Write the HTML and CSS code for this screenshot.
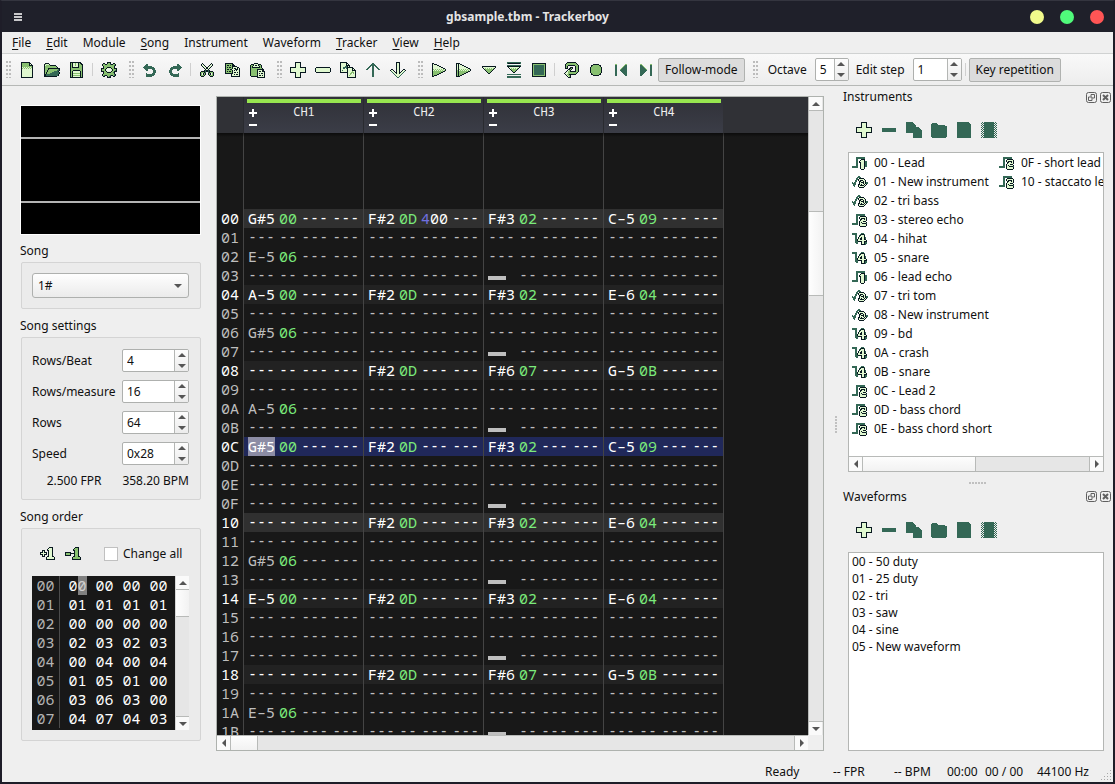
FILE: index.html
```html
<!DOCTYPE html>
<html lang="en">
<head>
<meta charset="utf-8">
<title>gbsample.tbm - Trackerboy</title>
<link rel="stylesheet" href="styles.css">
</head>
<body>
<div class="window">
  <header class="titlebar">
    <button class="win-menu" aria-label="Window menu"><span></span><span></span><span></span></button>
    <h1 class="win-title">gbsample.tbm - Trackerboy</h1>
    <div class="win-buttons">
      <button class="dot dot-yellow" aria-label="Minimize"></button>
      <button class="dot dot-green" aria-label="Maximize"></button>
      <button class="dot dot-red" aria-label="Close"></button>
    </div>
  </header>

  <nav class="menubar">
    <button><u>F</u>ile</button><button><u>E</u>dit</button><button>Module</button><button><u>S</u>ong</button><button>Instrument</button><button>Waveform</button><button><u>T</u>racker</button><button><u>V</u>iew</button><button><u>H</u>elp</button>
  </nav>

  <div class="toolbar">
    <i class="grip"></i>
    <button class="tool" data-icon="new" aria-label="New"></button>
    <button class="tool" data-icon="open" aria-label="Open"></button>
    <button class="tool" data-icon="save" aria-label="Save"></button>
    <i class="sep"></i>
    <button class="tool" data-icon="gear" aria-label="Configuration"></button>
    <i class="grip"></i>
    <button class="tool" data-icon="undo" aria-label="Undo"></button>
    <button class="tool" data-icon="redo" aria-label="Redo"></button>
    <i class="sep"></i>
    <button class="tool" data-icon="cut" aria-label="Cut"></button>
    <button class="tool" data-icon="copy" aria-label="Copy"></button>
    <button class="tool" data-icon="paste" aria-label="Paste"></button>
    <i class="grip"></i>
    <button class="tool" data-icon="plus" aria-label="Add song"></button>
    <button class="tool" data-icon="minus" aria-label="Remove song"></button>
    <button class="tool" data-icon="dup" aria-label="Duplicate"></button>
    <button class="tool" data-icon="up" aria-label="Move up"></button>
    <button class="tool" data-icon="down" aria-label="Move down"></button>
    <i class="grip"></i>
    <button class="tool" data-icon="play" aria-label="Play"></button>
    <button class="tool" data-icon="playstart" aria-label="Play from start"></button>
    <button class="tool" data-icon="playrow" aria-label="Play from cursor"></button>
    <button class="tool" data-icon="steprow" aria-label="Step row"></button>
    <button class="tool" data-icon="stop" aria-label="Stop"></button>
    <i class="sep"></i>
    <button class="tool" data-icon="loop" aria-label="Repeat pattern"></button>
    <button class="tool" data-icon="record" aria-label="Record"></button>
    <button class="tool" data-icon="prev" aria-label="Previous pattern"></button>
    <button class="tool" data-icon="next" aria-label="Next pattern"></button>
    <button class="toggle" aria-pressed="true">Follow-mode</button>
    <i class="grip"></i>
    <label class="tool-label" for="octave">Octave</label>
    <div class="spin spin-octave"><input id="octave" value="5"><div class="steps" data-steps></div></div>
    <label class="tool-label" for="step">Edit step</label>
    <div class="spin spin-step"><input id="step" value="1"><div class="steps" data-steps></div></div>
    <i class="sep"></i>
    <button class="toggle" aria-pressed="true">Key repetition</button>
  </div>

  <main class="workspace">
    <aside class="sidebar">
      <div class="scope"><i></i><i></i></div>
      <label class="caption" for="song">Song</label>
      <section class="group group-song">
        <div class="combo">
          <select id="song"><option>1#</option></select>
          <svg viewBox="0 0 8 4"><path d="M0 0h8L4 4z"/></svg>
        </div>
      </section>
      <h2 class="caption">Song settings</h2>
      <section class="group">
        <div class="field"><label for="rpb">Rows/Beat</label><div class="spin"><input id="rpb" value="4"><div class="steps" data-steps></div></div></div>
        <div class="field"><label for="rpm">Rows/measure</label><div class="spin"><input id="rpm" value="16"><div class="steps" data-steps></div></div></div>
        <div class="field"><label for="rows">Rows</label><div class="spin"><input id="rows" value="64"><div class="steps" data-steps></div></div></div>
        <div class="field"><label for="speed">Speed</label><div class="spin"><input id="speed" value="0x28"><div class="steps" data-steps></div></div></div>
        <div class="rates"><span>2.500 FPR</span><span>358.20 BPM</span></div>
      </section>
      <h2 class="caption">Song order</h2>
      <section class="group">
        <div class="order-tools">
          <button class="tool" data-icon="inc" aria-label="Increment"></button>
          <button class="tool" data-icon="dec" aria-label="Decrement"></button>
          <label class="check"><input type="checkbox">Change all</label>
        </div>
        <div class="order-box">
          <div class="order-view"><table class="order" id="order"></table></div>
          <div class="vbar">
            <button data-arrow="up" aria-label="Scroll up"></button>
            <div class="track"><div class="thumb thumb-order"></div></div>
            <button data-arrow="down" aria-label="Scroll down"></button>
          </div>
        </div>
      </section>
    </aside>

    <section class="editor">
      <div class="pattern-view">
        <div class="channels" id="channels"></div>
        <div class="pattern-body"><table class="pattern" id="pattern"></table></div>
      </div>
      <div class="vbar">
        <button data-arrow="up" aria-label="Scroll up"></button>
        <div class="track"><div class="thumb thumb-pattern"></div></div>
        <button data-arrow="down" aria-label="Scroll down"></button>
      </div>
      <div class="hbar">
        <button data-arrow="left" aria-label="Scroll left"></button>
        <div class="track"><div class="thumb thumb-wide"></div></div>
        <button data-arrow="right" aria-label="Scroll right"></button>
      </div>
    </section>

    <div class="splitter"><i></i></div>

    <aside class="docks">
      <div class="dock-title"><h2>Instruments</h2><span data-dock></span></div>
      <div class="dock-tools" data-tools></div>
      <div class="list list-instruments">
        <ul id="instruments"></ul>
        <div class="hbar">
          <button data-arrow="left" aria-label="Scroll left"></button>
          <div class="track"><div class="thumb thumb-half"></div></div>
          <button data-arrow="right" aria-label="Scroll right"></button>
        </div>
      </div>
      <div class="dock-split"><i></i></div>
      <div class="dock-title"><h2>Waveforms</h2><span data-dock></span></div>
      <div class="dock-tools" data-tools></div>
      <div class="list list-waveforms">
        <ul>
          <li>00 - 50 duty</li><li>01 - 25 duty</li><li>02 - tri</li><li>03 - saw</li><li>04 - sine</li><li>05 - New waveform</li>
        </ul>
      </div>
    </aside>
  </main>

  <footer class="status">
    <span class="st-ready">Ready</span><span class="st-fpr">-- FPR</span><span class="st-bpm">-- BPM</span><span class="st-time">00:00</span><span class="st-pos">00 / 00</span><span class="st-rate">44100 Hz</span>
    <svg class="size-grip" viewBox="0 0 12 12"><path d="M9 0h1v1h-1zM6 3h1v1h-1zM9 3h1v1h-1zM3 6h1v1h-1zM6 6h1v1h-1zM9 6h1v1h-1zM0 9h1v1h-1zM3 9h1v1h-1zM6 9h1v1h-1zM9 9h1v1h-1z"/></svg>
  </footer>
</div>
<script src="app.js"></script>
</body>
</html>
```
FILE: styles.css
```css
* { box-sizing: border-box; }

body {
  margin: 0;
  height: 100vh;
  font: 12px/16px "Noto Sans", "Open Sans", sans-serif;
  color: #101010;
  background: #1c1b26;
}

button, input, select { font: inherit; color: inherit; margin: 0; padding: 0; border: 0; background: none; }
h1, h2 { margin: 0; font-size: inherit; font-weight: normal; }
ul { margin: 0; padding: 0; list-style: none; }
svg { display: block; }

.window {
  height: 100%;
  display: flex;
  flex-direction: column;
  border: 2px solid #1e1d28;
  border-top: 1px solid #34353f;
  background: #efefef;
}

/* Title bar */
.titlebar {
  flex: none;
  height: 31px;
  display: grid;
  grid-template-columns: 1fr auto 1fr;
  align-items: center;
  background: #1f202a;
  color: #e4e4e4;
}
.win-menu { width: 8px; margin-left: 12px; display: grid; gap: 1px; }
.win-menu span { height: 2px; background: #c8c8ca; }
.win-title { font-weight: bold; padding-right: 60px; }
.win-buttons { display: flex; justify-content: flex-end; gap: 16px; padding-right: 9px; }
.dot { width: 14px; height: 14px; border-radius: 50%; }
.dot-yellow { background: #f1fa8c; }
.dot-green { background: #50fa7b; }
.dot-red { background: #ff5555; }

/* Menu */
.menubar { flex: none; height: 22px; display: flex; gap: 15px; padding: 0 10px; border-bottom: 1px solid #d0d2d2; }
.menubar u { text-underline-offset: 2px; }

/* Toolbar */
.toolbar {
  flex: none;
  height: 32px;
  display: flex;
  align-items: center;
  border-bottom: 1px solid #b6b8b6;
  background: linear-gradient(#f9f9f9, #ededed);
}
.grip {
  flex: none;
  width: 5px;
  height: 17px;
  margin: 0 3px 0 8px;
  background: radial-gradient(circle at 1px 1px, #bcbcbc 1px, transparent 1px) 0 0 / 3px 4px;
}
.grip:first-child { margin-left: 4px; }
.sep { flex: none; width: 1px; height: 13px; margin: 0 3px; background: #cfcfcf; }
.tool { flex: none; width: 25px; height: 24px; display: grid; place-items: center; }
.tool svg { width: 16px; height: 16px; }
.toggle {
  flex: none;
  height: 24px;
  padding: 0 6px;
  border: 1px solid #b0b2b0;
  border-radius: 2px;
  background: #dcdcdc;
}
.tool-label { margin: 0 8px 0 7px; white-space: nowrap; }

.spin {
  display: flex;
  width: 67px;
  height: 23px;
  border: 1px solid #aeb0ae;
  border-radius: 2px;
  background: #fff;
  overflow: hidden;
}
.spin input { flex: 1; min-width: 0; padding-left: 4px; outline: 0; }
.spin-octave { width: 34px; }
.spin-step { width: 49px; }
.steps { width: 14px; display: grid; border-left: 1px solid #b4b6b4; background: linear-gradient(#fdfdfd, #ececec); }
.steps button { display: grid; place-items: center; }
.steps svg { width: 8px; height: 4px; fill: #555; }

/* Workspace */
.workspace { flex: 1; min-height: 0; display: flex; padding-bottom: 9px; }

.sidebar { flex: none; width: 181px; margin: 19px 15px 0 18px; }
.scope {
  height: 130px;
  border: 1px solid #fff;
  background: #000;
  display: flex;
  flex-direction: column;
  justify-content: space-between;
  padding: 31px 0;
}
.scope i { height: 2px; background: #b4b4b4; }
.caption { display: block; line-height: 17px; padding-top: 8px; }
label.caption { padding: 7px 0 1px; }
.group { margin: 3px 0 0 1px; padding: 10px 11px 10px 10px; border: 1px solid #d4d4d4; border-radius: 2px; background: #ebebeb; }
.group-song { margin-top: 2px; }

.combo { display: grid; align-items: center; }
.combo select, .combo svg { grid-area: 1 / 1; }
.combo select {
  appearance: none;
  height: 25px;
  padding-left: 5px;
  border: 1px solid #aeb0ae;
  border-radius: 3px;
  background: linear-gradient(#fefefe, #ebebeb);
}
.combo svg { justify-self: end; width: 8px; height: 4px; margin-right: 7px; fill: #555; pointer-events: none; }

.field { display: flex; justify-content: space-between; align-items: center; height: 23px; margin: 1px 0 8px; }
.rates { display: flex; justify-content: flex-end; gap: 21px; }

.order-tools { display: flex; align-items: center; height: 30px; padding-left: 3px; }
.check { display: flex; align-items: center; gap: 5px; margin-left: 19px; }
.check input { appearance: none; width: 14px; height: 14px; border: 1px solid #c0c0c0; background: #fff; }
.order-box { display: flex; height: 154px; margin-top: 7px; }
.order-view { flex: 1; overflow: hidden; background: #181818; }

.order, .pattern, .channels { font-family: "Noto Sans Mono", "DejaVu Sans Mono", monospace; }
.order, .pattern { border-collapse: collapse; font-size: 15px; line-height: 19px; color: #fff; white-space: pre; }
.order th { width: 27px; padding: 0; border-right: 1px solid #4c4c4c; color: #b4b4b4; font-weight: normal; text-align: right; padding-right: 4px; }
.order td { padding: 0 0 0 9px; }
.order mark { background: #808080; color: #d0d0d0; }

/* Scroll bars */
.vbar { display: flex; flex-direction: column; width: 15px; border-left: 1px solid #b8bab8; background: #e6e6e6; }
.order-box .vbar { width: 14px; border-left-color: #d8d8d8; }
.hbar { display: flex; height: 15px; border-top: 1px solid #b8bab8; background: #e6e6e6; }
.vbar button, .hbar button { flex: none; width: 13px; height: 13px; display: grid; place-items: center; background: #fafafa; }
.hbar button { height: 14px; }
.vbar button svg, .hbar button svg { width: 8px; height: 8px; fill: #555; }
.track { flex: 1; display: flex; }
.vbar .track { flex-direction: column; border: 1px solid #b8bab8; border-width: 1px 0; }
.hbar .track { border: 1px solid #b8bab8; border-width: 0 1px; }
.thumb { background: linear-gradient(90deg, #fefefe, #f2f2f2); }
.hbar .thumb { background: linear-gradient(#fdfdfd, #f2f2f2); }
.thumb-order { height: 27px; border-bottom: 1px solid #b8bab8; }
.thumb-pattern { height: 85px; margin-top: 100px; border: 1px solid #b8bab8; border-width: 1px 0; }
.thumb-wide { width: 27px; border-right: 1px solid #b8bab8; }
.thumb-half { width: 50%; border-right: 1px solid #b8bab8; }

/* Pattern editor */
.editor {
  flex: 1;
  min-width: 0;
  margin-top: 10px;
  display: grid;
  grid-template: minmax(0, 1fr) 15px / minmax(0, 1fr) 15px;
  border: 1px solid #aeb2ae;
}
.pattern-view { display: flex; flex-direction: column; overflow: hidden; background: #181818; }
.channels { flex: none; display: flex; height: 36px; background: #303136; font-size: 12px; line-height: 16px; color: #f0f0f0; }
.channels::before { content: ""; width: 26px; flex: none; }
.channel {
  flex: none;
  width: 120px;
  display: grid;
  grid-template: 4px 1fr / 18px 1fr;
  padding: 2px 2px 0 3px;
  border-left: 1px solid #2a2b30;
  background: linear-gradient(#303138, #3b3d47);
}
.channel .meter { grid-column: 1 / 3; background: #98e650; }
.channel .name { text-align: center; padding: 1px 18px 0 0; }
.channel .fx { padding: 6px 0 0 2px; display: grid; align-content: start; gap: 7px; }
.channel .fx button { width: 8px; height: 8px; }
.channel .fx button + button { height: 2px; }
.channel .fx svg { fill: #fff; width: 100%; height: 100%; }
.pattern-body {
  flex: 1;
  min-height: 0;
  overflow: hidden;
  padding-top: 76px;
  background:
    linear-gradient(#0008, #0000) 0 0 / 100% 4px no-repeat,
    linear-gradient(#444, #444) 26px 0 / 1px 100% no-repeat,
    linear-gradient(#444, #444) 146px 0 / 1px 100% no-repeat,
    linear-gradient(#444, #444) 266px 0 / 1px 100% no-repeat,
    linear-gradient(#444, #444) 386px 0 / 1px 100% no-repeat,
    linear-gradient(#444, #444) 506px 0 / 1px 100% no-repeat,
    #181818;
}
.pattern { table-layout: fixed; width: 506px; color: #bebebe; }
.pattern tr { height: 19px; }
.pattern th { width: 26px; padding: 0 0 0 4px; text-align: left; font-weight: normal; }
.pattern td { padding: 0; }
.cells { display: flex; gap: 4px; height: 19px; margin-left: 1px; padding-left: 4px; }
.cells b { font-weight: normal; color: #7bea7b; }
.cells em { font-style: normal; color: #7070e0; }
.cells .void { font-family: "DejaVu Sans Mono", monospace; }
.cells .cut { width: 27px; }
.cells .cut::before { content: ""; display: block; width: 18px; height: 4px; margin-top: 10px; background: #bebebe; }
.beat { color: #fff; }
.beat .cells { background: #222; }
.measure .cells { background: #303030; }
.current .cells { background: #20285a; }
.current .cells .picked { background: #8c8ca4; }

/* Docks */
.splitter { flex: none; width: 19px; display: grid; place-items: center; padding: 12px 0 0 5px; }
.splitter i, .dock-split i { background: radial-gradient(circle at 1px 1px, #c0c0c0 1px, transparent 1px) 0 0 / 3px 3px; }
.splitter i { width: 2px; height: 17px; }
.docks { flex: none; width: 268px; margin-right: 2px; display: flex; flex-direction: column; min-height: 0; }
.dock-title { flex: none; height: 22px; display: flex; align-items: center; justify-content: space-between; }
.dock-title span { display: flex; gap: 3px; }
.dock-title svg { width: 11px; height: 11px; fill: none; stroke: #606060; }
.dock-tools { flex: none; height: 44px; display: flex; align-items: center; padding-left: 8px; }
.dock-split { flex: none; height: 14px; display: grid; place-items: end center; padding-bottom: 2px; }
.dock-split i { width: 17px; height: 2px; }
.list { min-height: 0; margin: 0 7px 0 5px; border: 1px solid #b4b6b4; background: #fff; display: flex; flex-direction: column; }
.list-instruments { flex: 320 1 0; }
.list-waveforms { flex: 199 1 0; }
.list ul { flex: 1; min-height: 0; overflow: hidden; }
.list-instruments ul { display: flex; flex-flow: column wrap; align-content: flex-start; }
.list-instruments li { width: 147px; height: 19px; display: flex; align-items: center; gap: 6px; padding-left: 3px; white-space: nowrap; }
.list-instruments svg { flex: none; width: 16px; height: 16px; }
.list-waveforms li { line-height: 17px; padding-left: 3px; }

/* Status bar */
.status { flex: none; height: 22px; display: flex; align-items: center; justify-content: flex-end; padding-top: 2px; }
.st-ready { width: 68px; }
.st-fpr { width: 61px; }
.st-bpm { width: 53px; }
.st-time { width: 38px; }
.st-pos { width: 52px; }
.st-rate { width: 64px; }
.size-grip { align-self: end; width: 12px; height: 12px; fill: #a8a8a8; }
```
FILE: app.js
```js
const INK = { '#': '#081820', g: '#346856', l: '#88c070', w: '#e0f8d0' };

// Pixel icons: one string per row, one character per pixel.
const ICONS = {
  new: ['..#########', '..#lllllll##', '..#lllllll#w#', '..#lllllll####', '..#llllllllll#', '..#wlwlwlwlwl#', '..#lwlwlwlwlw#', '..#wwwwwwwwww#', '..#wwwwwwwwww#', '..#wwwwwwwwww#', '..#wwwwwwwwww#', '..#wwwwwwwwww#', '..#wwwwwwwwww#', '..#wwwwwwwwww#', '..#wwwwwwwwww#', '..############'],
  open: ['', '.####', '#lwww#', '#wllll######', '#lllllllllll#', '#llllllllllll#', '#lll############', '#lll#lllllllllg#', '#ll#lllllllllgg#', '#ll#llllllgggg#', '#l#lllllggggggg#', '#l#lllggggggggg#', '##gggggggggggg#', '##gggggggggggg#', '#############', ''],
  save: ['.###########', '.#l#wwlww#l##', '.#l#wwlww#ll##', '.#l#wwlww#lll#', '.#l#wwwww#lll#', '.#l#######lll#', '.#lllllllllll#', '.#lllllllllll#', '.#ll#######ll#', '.#l#wwwwwww#l#', '.#l#wwwwwww#l#', '.#l#lllllll#l#', '.#l#wwwwwww#l#', '.#l#lllllll#l#', '.#l#wwwwwww#l#', '.#############'],
  gear: ['......####', '..##..#ll#..##', '.#ll##lllg##ll#', '.#lllllllllllg#', '..#llllllllll#', '..#lll####lll#', '###ll#wwww#ll###', '#lll#w....w#lll#', '#lll#w....w#llg#', '###ll#wwww#ll###', '..#lll####llg#', '..#llllllllll#', '.#lllllllllllg#', '.#lg##lllg##lg#', '..##..#lg#..##', '......####'],
  undo: ['', '', '....gg', '...ggg', '..gggggggg', '.ggggggggggg', '..ggggggggggg', '...ggg....ggg', '....gg.....ggg', '...........ggg', '...........ggg', '....g.....ggg', '....ggggggggg', '....gggggggg', '....gggggg', ''],
  redo: ['', '', '..........gg', '..........ggg', '......gggggggg', '....ggggggggggg', '...ggggggggggg', '...ggg....ggg', '..ggg.....gg', '..ggg', '..ggg', '...ggg.....g', '...ggggggggg', '....gggggggg', '......gggggg', ''],
  cut: ['', '...#........#', '..#w#......#w#', '..#ww#....#ww#', '...#ww#..#ww#', '....#ww##ww#', '.....#w##w#', '......#ww#', '.....#g##g#', '..####g##g####', '.#lll#g..g#lll#', '.#l.#l#..#l#.l#', '.#l.#l#..#l#.l#', '.#lll#....#lll#', '..###......###', ''],
  copy: ['', '.########', '.#llllll##', '.#l##l#l###', '.#llllll#####', '.#l#l##l#wwww##', '.#llllll#w##w#w#', '.#l##l##www###w#', '.#llllll#w#w#ww#', '.#l#l##l#wwwwww#', '.#llllll#w##w#w#', '.########wwwwww#', '.......#ww#w##w#', '.......#wwwwwww#', '.......#########', ''],
  paste: ['', '.....####', '..###wwww###', '.#ll#w##w#ll#', '.#l#wwwwww#l#', '.#l########l#', '.#lllllllllll#', '.#llllll#######', '.#llllll#wwww##', '.#llllll#w##w###', '.#llllll#wwwwww#', '.#llllll#w#w##w#', '.#llllll#wwwwww#', '.#llllll#w##w#w#', '..#######wwwwww#', '........########'],
  plus: ['.....######', '.....#wwww#', '.....#wwww#', '.....#wwww#', '.....#wwww#', '######wwww######', '#wwwwwwwwwwwwww#', '#wwwwwwwwwwwwww#', '#wwwwwwwwwwwwww#', '#wwwwwwwwwwwwww#', '######wwww######', '.....#wwww#', '.....#wwww#', '.....#wwww#', '.....#wwww#', '.....######'],
  minus: ['', '', '', '', '', '.##############', '#wwwwwwwwwwwwww#', '#wwwwwwwwwwwwww#', '#wwwwwwwwwwwwww#', '#wwwwwwwwwwwwww#', '.##############', '', '', '', '', ''],
  dup: ['#######', '#wwwww##', '#wwwww#w#', '#wwwww####', '#wwwwgg#w#', '#wwgggg######', '#wwgg.g#wwww##', '#wwwwww#wwww#w#', '#wgwwww#wwww####', '#wwwwww#wwwwlww#', '########wwwlllw#', '.......#wwll.lw#', '.......#wwlwwww#', '.......#wlwwwww#', '.......#wwwwwww#', '.......#########'],
  up: ['', '.......gg', '......gggg', '.....gggggg', '....gg.gg.gg', '...gg..gg..gg', '..gg...gg...gg', '.gg....gg....gg', '.......gg', '.......gg', '.......gg', '.......gg', '.......gg', '.......gg', '.......gg', ''],
  down: ['......####', '......#ww#', '......#ww#', '......#ww#', '......#ww#', '......#ww#', '......#ww#', '.##...#ww#...##', '#ww#..#ww#..#ww#', '.gww#.#ww#.#wwg', '..gww##ww##wwg', '...gww#ww#wwg', '....gwwwwwwg', '.....gwwwwg', '......gwwg', '.......gg'],
  play: ['', '.##', '.#w###', '.#wwww##', '.#wwwwww##', '.#wwwwwwww##', '.#wwwwwwwwww##', '.#lwlwlwlwlwlw#', '.#wlwlwlwlwlwl#', '.#llllllllll##', '.#llllllll##', '.#llllll##', '.#llll##', '.#l###', '.##', ''],
  playstart: ['', '####', '#w#w##', '#w#www##', '#w#wwwww##', '#w#wwwwwww##', '#w#wwwwwwwww##', '#w#lwlwlwlwlwl#', '#l#wlwlwlwlwlw#', '#l#lllllllll##', '#l#lllllll##', '#l#lllll##', '#l#lll##', '#l#l##', '####', ''],
  playrow: ['', '', '', '', '.##############', '.#wwwwwwwwwwww#', '..#wlwlwlwlwl#', '...#llllllll#', '....#llllll#', '.....#llll#', '......#ll#', '.......##', '', '', '', ''],
  steprow: ['.gggggggggggggg', '.g############g', '', '.gggggggggggggg', '.##############', '..#wwwwwwwwww#', '...#wlwlwlwl#', '....#llllll#', '.....#llll#', '......#ll#', '.......##', '', '.gggggggggggggg', '', '.gggggggggggggg', '.gggggggggggggg'],
  stop: ['', '.##############', '.#llllllllllll#', '.#lggggggggggl#', '.#lggggggggggl#', '.#lggggggggggl#', '.#lggggggggggl#', '.#lggggggggggl#', '.#lggggggggggl#', '.#lggggggggggl#', '.#lggggggggggl#', '.#lggggggggggl#', '.#lggggggggggl#', '.#llllllllllll#', '.##############', ''],
  loop: ['....#########', '...#lllllllll#', '..#lllllllllll#', '..#ll#######lll#', '..#l#.......#ll#', '..#l#..###..#ll#', '..###.##l#..#ll#', '.....##l#...#ll#', '....#wl#....#ll#', '...#wll######ll#', '..#wwlllllllll#', '.#wwwllllllll#', '..#wll#######', '...#wll#', '....#wl#', '.....###'],
  record: ['', '', '.....######', '...##llllll##', '...#llllllll#', '..#llllllllll#', '..#llllllllll#', '..#llllllllll#', '..#llllllllll#', '..#llllllllll#', '..#llllllllll#', '...#llllllll#', '...##llllll##', '.....######', '', ''],
  prev: ['', '', '..ll........ll', '..gg.......lgg', '..gg......lggg', '..gg.....lgggg', '..gg....lggggg', '..gg...lgggggg', '..gg...ggggggg', '..gg....gggggg', '..gg.....ggggg', '..gg......gggg', '..gg.......ggg', '..gg........gg', '', ''],
  next: ['', '', '..ll........ll', '..ggl.......gg', '..gggl......gg', '..ggggl.....gg', '..gggggl....gg', '..ggggggl...gg', '..ggggggg...gg', '..gggggg....gg', '..ggggg.....gg', '..gggg......gg', '..ggg.......gg', '..gg........gg', '', ''],
  inc: ['', '.........####', '........#www#', '.......#wwww#', '..###..##www#', '..#w#...#www#', '###w###.#www#', '#wwwww#.#www#', '###w###.#www#', '..#w#...#www#', '..###..##www##', '......#wwwwwww#', '......#wwwwwww#', '......#########', '', ''],
  dec: ['', '..........####', '.........#lll#', '........#llll#', '........##lll#', '.........#lll#', '######...#lll#', '#llll#####lll#', '#llll#...#lll#', '######...#lll#', '........##lll##', '.......#lllllll#', '.......#lllllll#', '.......#########', '', ''],
  rm: ['', '', '', '', '', '', '.gggggggggggggg', '.gggggggggggggg', '.gggggggggggggg', '.gggggggggggggg'],
  dupOff: ['ggggggg', 'gggggggg', 'ggggggggg', 'gggggggggg', 'gggggggggg', 'ggggggggggggg', 'gggggggggggggg', 'ggggggggggggggg', 'gggggggggggggggg', 'gggggggggggggggg', 'gggggggggggggggg', '.......ggggggggg', '.......ggggggggg', '.......ggggggggg', '.......ggggggggg', '.......ggggggggg'],
  folder: ['', '.ggggg', 'ggggggg', 'gggggggggggggg', ...Array(11).fill('gggggggggggggggg'), '.gggggggggggggg'],
  page: ['.gggggggggggg', '.ggggggggggggg', ...Array(14).fill('.gggggggggggggg')],
  chip: Array.from({ length: 16 }, (_, y) => y % 2 ? 'g.gggggggggggg.g' : '.g.gggggggggg.g.'),
  ch1: ['', '', '....ggggggggg', '....ggggggggg', '....gg...####', '....gg..#www#', '....gg.#wwww#gg', '....gg.##www#gg', '....gg..#www#gg', '....gg..#www#gg', '....gg..#www#gg', 'gggggg..#www#gg', 'gggggg..#www#', '........#www#', '.........###'],
  ch2: ['', '', '....ggggggggg', '....ggggggggg', '....gg..######', '....gg.#wwwwww#', '....gg.#w####w#', '....gg..##ww#w#', '....gg..#wwwww#', '....gg.#www###', '....gg.#w#wwww#', 'gggggg.#ww####g', 'gggggg.#wwwwww#', '.......#wwwwww#', '........######'],
  ch3: ['', '', '......gg', '.....gggg', '....gg.#####', '....gg#wwwww#', '...gg.#w###ww#', '...gg..##ww#w#', 'g.gg...#w###w#gg', 'gggg...#www#w#gg', '.ggg..##w#ww#w#', '.gg...#w####w#', '..g...#wwwww#', '.......#####', ''],
  ch4: ['', '', 'ggggg....ggg', 'ggggg...g###g', '...gg..g#www#', '...gg..#wwww#', '...gg.#ww#ww#g', '...gg.#w##ww#g', '...gg#ww##ww##', '...gg#wwwwwwww#', '...ggg####ww###', '...ggg...#ww#gg', '....gg...#ww#gg', '.........####g', '']
};

function icon(name) {
  const paths = {};
  ICONS[name].forEach((row, y) => {
    for (const run of row.matchAll(/([#glw])\1*/g)) {
      paths[run[1]] = (paths[run[1]] || '') + `M${run.index} ${y}h${run[0].length}v1h-${run[0].length}z`;
    }
  });
  return '<svg viewBox="0 0 16 16" shape-rendering="crispEdges">' +
    Object.entries(paths).map(([k, d]) => `<path fill="${INK[k]}" d="${d}"/>`).join('') + '</svg>';
}

const all = (sel, fn) => document.querySelectorAll(sel).forEach(fn);

all('[data-tools]', el => {
  el.innerHTML = [['plus', 'Add'], ['rm', 'Remove'], ['dupOff', 'Duplicate'], ['folder', 'Import'], ['page', 'Export'], ['chip', 'Edit']]
    .map(([i, t]) => `<button class="tool" data-icon="${i}" aria-label="${t}"></button>`).join('');
});
all('[data-icon]', el => { el.innerHTML = icon(el.dataset.icon); });
all('[data-steps]', el => {
  el.innerHTML = '<button aria-label="Increase"><svg viewBox="0 0 8 4"><path d="M0 4h8L4 0z"/></svg></button>' +
    '<button aria-label="Decrease"><svg viewBox="0 0 8 4"><path d="M0 0h8L4 4z"/></svg></button>';
});
const ARROWS = { up: 'M0 6h8L4 2z', down: 'M0 2h8L4 6z', left: 'M6 0v8L2 4z', right: 'M2 0v8l4-4z' };
all('[data-arrow]', el => { el.innerHTML = `<svg viewBox="0 0 8 8"><path d="${ARROWS[el.dataset.arrow]}"/></svg>`; });
all('[data-dock]', el => {
  el.innerHTML =
    '<button aria-label="Float"><svg viewBox="0 0 11 11"><rect x=".5" y=".5" width="10" height="10" rx="2"/><path d="M5 4.500V2.500h3.500v3.500h-2M2.500 5h3.500v3.500h-3.500z"/></svg></button>' +
    '<button aria-label="Close"><svg viewBox="0 0 11 11"><rect x=".5" y=".5" width="10" height="10" rx="2"/><path stroke-width="2" d="M3 3l5 5M8 3l-5 5"/></svg></button>';
});

// Song order
const ORDER = ['00 00 00 00', '01 01 01 01', '00 00 00 00', '02 03 02 03', '00 04 00 04', '01 05 01 00', '03 06 03 00', '04 07 04 03'];
const hex = n => n.toString(16).toUpperCase().padStart(2, '0');
document.getElementById('order').innerHTML = ORDER.map((row, i) =>
  `<tr><th>${hex(i)}</th>` + row.split(' ').map((v, c) =>
    `<td>${i === 0 && c === 0 ? '0<mark>0</mark>' : v}</td>`).join('') + '</tr>').join('');

// Channel headers
document.getElementById('channels').innerHTML = [1, 2, 3, 4].map(n =>
  `<div class="channel"><div class="meter"></div><div class="fx">
    <button aria-label="Show effect"><svg viewBox="0 0 8 8"><path d="M3 0h2v3h3v2h-3v3h-2v-3h-3v-2h3z"/></svg></button>
    <button aria-label="Hide effect"><svg viewBox="0 0 8 2"><path d="M0 0h8v2h-8z"/></svg></button>
  </div><div class="name">CH${n}</div></div>`).join('');

// Pattern rows: note and instrument per channel, "cut" for a note cut
const NOTES = [
  { 0: 'G#5 00', 2: 'E–5 06', 4: 'A–5 00', 6: 'G#5 06', 10: 'A–5 06', 12: 'G#5 00', 18: 'G#5 06', 20: 'E–5 00', 26: 'E–5 06' },
  { 0: 'F#2 0D 400', 4: 'F#2 0D', 8: 'F#2 0D', 12: 'F#2 0D', 16: 'F#2 0D', 20: 'F#2 0D', 24: 'F#2 0D' },
  { 0: 'F#3 02', 3: 'cut', 4: 'F#3 02', 7: 'cut', 8: 'F#6 07', 11: 'cut', 12: 'F#3 02', 15: 'cut', 16: 'F#3 02', 19: 'cut', 20: 'F#3 02', 23: 'cut', 24: 'F#6 07', 27: 'cut' },
  { 0: 'C–5 09', 4: 'E–6 04', 8: 'G–5 0B', 12: 'C–5 09', 16: 'E–6 04', 20: 'E–6 04', 24: 'G–5 0B' }
];
const empty = n => `<span class="void">${'-'.repeat(n)}</span>`;
function cells(text, picked) {
  const [note, inst, fx] = (text || '').split(' ');
  let first = empty(3);
  if (note === 'cut') first = '<span class="cut"></span>';
  else if (note) first = `<span${picked ? ' class="picked"' : ''}>${note}</span>`;
  return '<div class="cells">' + first +
    (inst ? `<b>${inst}</b>` : empty(2)) +
    (fx ? `<span><em>${fx[0]}</em>${fx.slice(1)}</span>` : empty(3)) + empty(3) + '</div>';
}
let html = '';
for (let r = 0; r < 28; r++) {
  const cls = [r % 4 ? '' : 'beat', r % 16 ? '' : 'measure', r === 12 ? 'current' : ''].join(' ').trim();
  html += `<tr class="${cls}"><th>${hex(r)}</th>` +
    NOTES.map((ch, c) => `<td>${cells(ch[r], r === 12 && c === 0)}</td>`).join('') + '</tr>';
}
document.getElementById('pattern').innerHTML = html;

// Instruments: channel kind and name
const INSTRUMENTS = [[1, 'Lead'], [3, 'New instrument'], [3, 'tri bass'], [2, 'stereo echo'], [4, 'hihat'], [4, 'snare'], [1, 'lead echo'], [3, 'tri tom'], [3, 'New instrument'], [4, 'bd'], [4, 'crash'], [4, 'snare'], [2, 'Lead 2'], [2, 'bass chord'], [2, 'bass chord short'], [2, 'short lead'], [2, 'staccato lead']];
document.getElementById('instruments').innerHTML = INSTRUMENTS.map(([ch, name], i) =>
  `<li>${icon('ch' + ch)}<span>${hex(i)} - ${name}</span></li>`).join('');
```
